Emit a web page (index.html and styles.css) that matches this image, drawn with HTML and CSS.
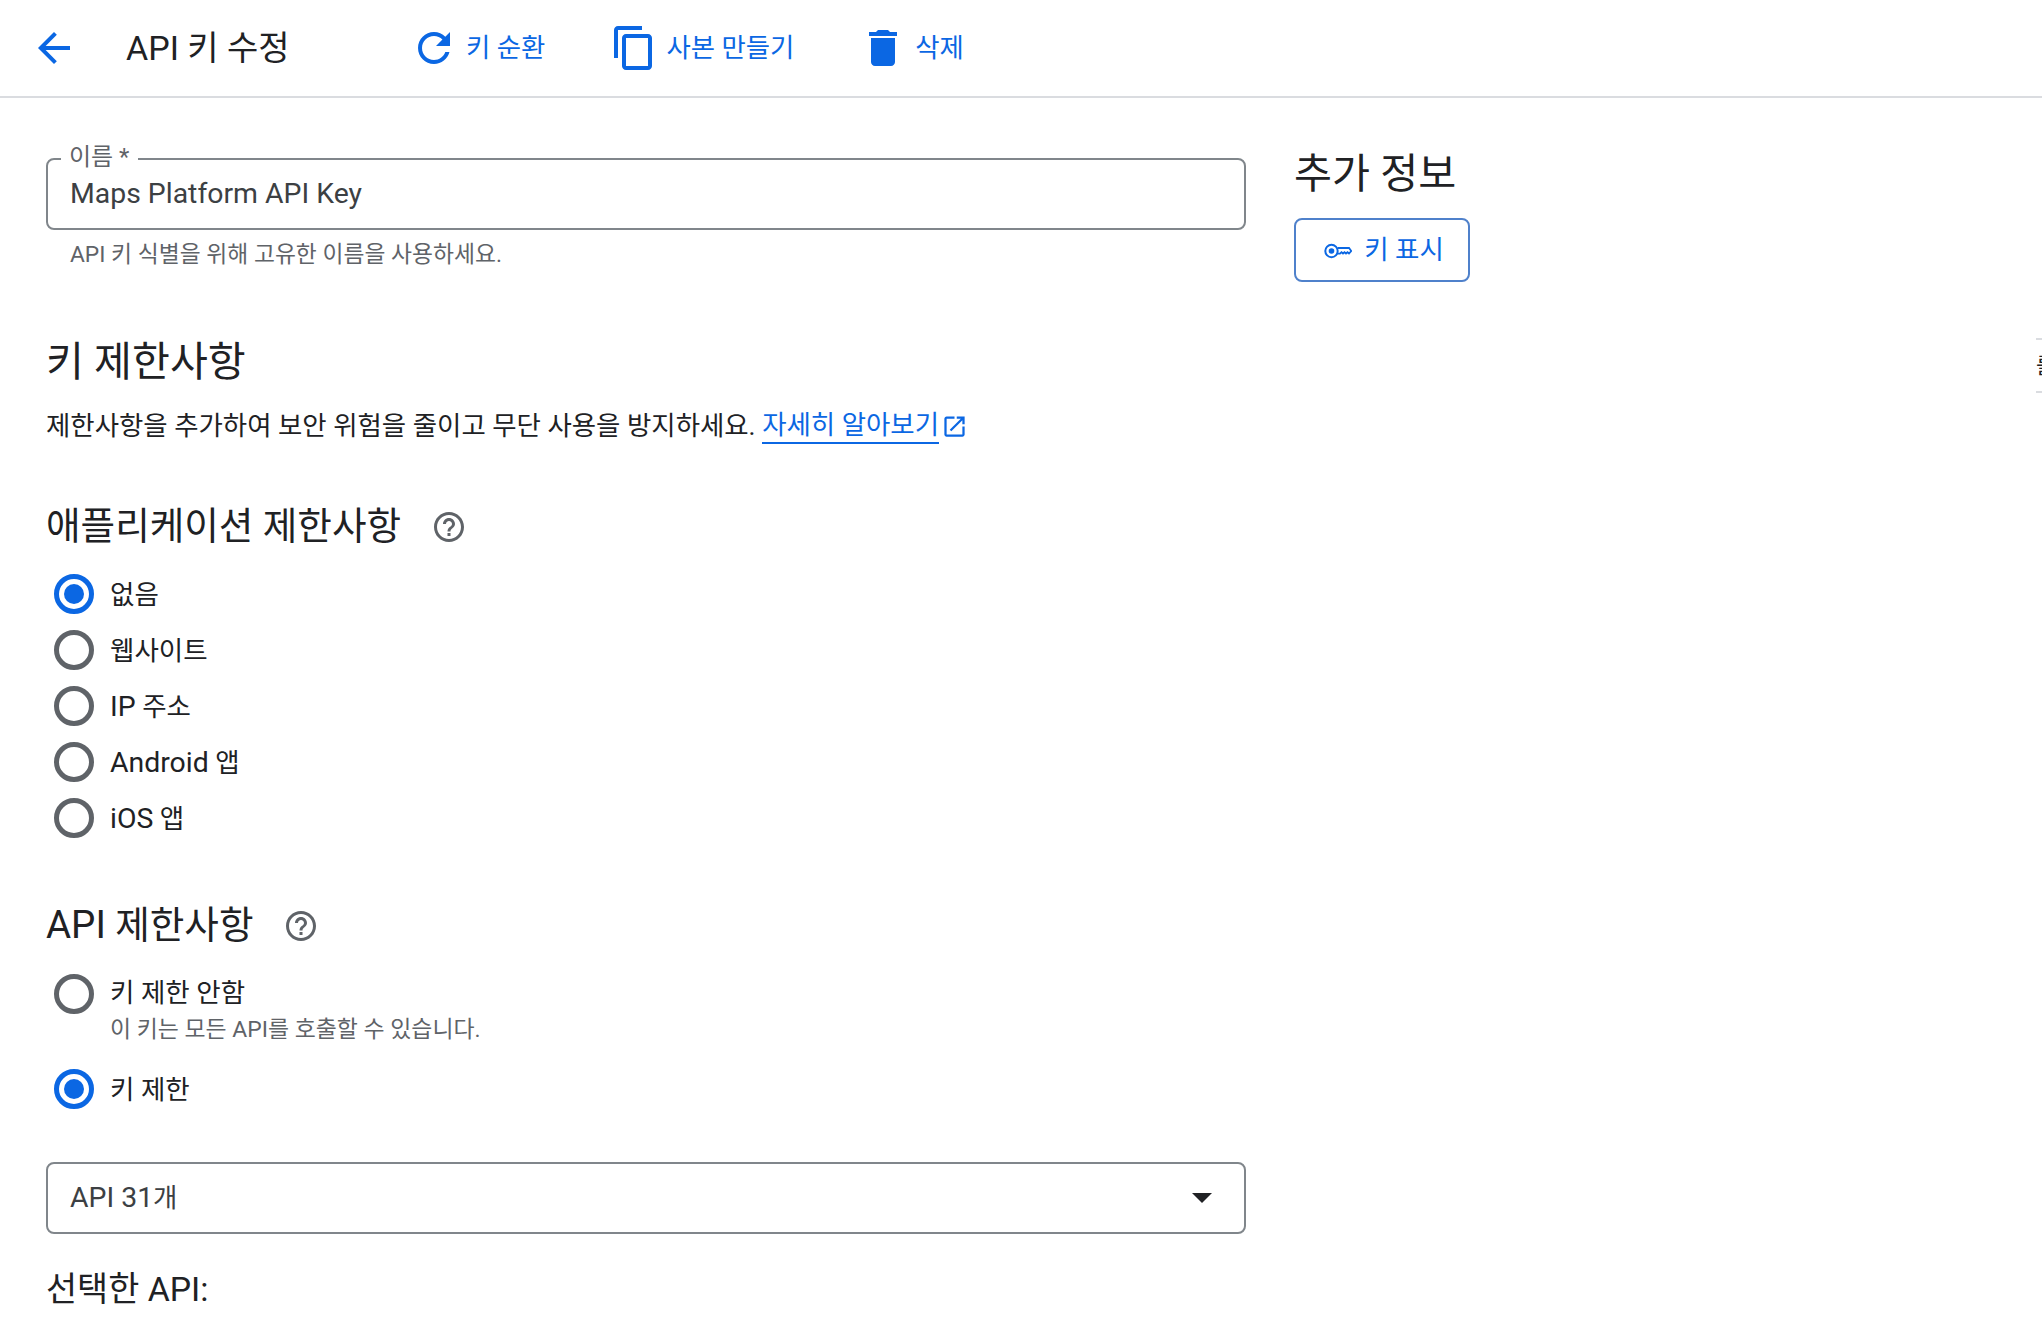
FILE: index.html
```html
<!DOCTYPE html>
<html lang="ko">
<head>
<meta charset="utf-8">
<title>API 키 수정</title>
<link rel="stylesheet" href="styles.css">
</head>
<body>
<header class="topbar">
  <svg class="icon-48 back" viewBox="0 0 24 24"><path d="M20 11H7.83l5.59-5.59L12 4l-8 8 8 8 1.41-1.41L7.83 13H20v-2z"/></svg>
  <h1 class="page-title">API 키 수정</h1>
  <div class="action act-rotate"><svg class="icon-48" viewBox="0 0 24 24"><path d="M17.65 6.35C16.2 4.9 14.21 4 12 4c-4.42 0-7.99 3.58-7.99 8s3.57 8 7.99 8c3.73 0 6.84-2.55 7.73-6h-2.08c-.82 2.33-3.04 4-5.65 4-3.31 0-6-2.69-6-6s2.69-6 6-6c1.66 0 3.14.69 4.22 1.78L13 11h7V4l-2.35 2.35z"/></svg><span>키 순환</span></div>
  <div class="action act-copy"><svg class="icon-48" viewBox="0 0 24 24"><path d="M16 1H4c-1.1 0-2 .9-2 2v14h2V3h12V1zm3 4H8c-1.1 0-2 .9-2 2v14c0 1.1.9 2 2 2h11c1.100 0 2-.9 2-2V7c0-1.1-.9-2-2-2zm0 16H8V7h11v14z"/></svg><span>사본 만들기</span></div>
  <div class="action act-delete"><svg class="icon-48" viewBox="0 0 24 24"><path d="M6 19c0 1.1.9 2 2 2h8c1.100 0 2-.9 2-2V7H6v12zM19 4h-3.500l-1-1h-5l-1 1H5v2h14V4z"/></svg><span>삭제</span></div>
</header>

<main class="layout">
  <section class="content">
    <div class="field name-field">
      <span class="field-label">이름 *</span>
      <span class="field-value name-value lat">Maps Platform API Key</span>
    </div>
    <p class="hint">API 키 식별을 위해 고유한 이름을 사용하세요.</p>

    <h2 class="heading h-key">키 제한사항</h2>
    <p class="desc">제한사항을 추가하여 보안 위험을 줄이고 무단 사용을 방지하세요. <a class="link">자세히 알아보기</a><svg class="ext" viewBox="0 0 24 24"><path d="M19 19H5V5h7V3H5c-1.110 0-2 .9-2 2v14c0 1.100.89 2 2 2h14c1.100 0 2-.9 2-2v-7h-2v7zM14 3v2h3.590l-9.830 9.830 1.410 1.410L19 6.410V10h2V3h-7z"/></svg></p>

    <div class="heading-row h-app">
      <h2 class="heading">애플리케이션 제한사항</h2>
      <svg class="help" viewBox="0 0 24 24"><path d="M11 18h2v-2h-2v2zm1-16C6.480 2 2 6.480 2 12s4.480 10 10 10 10-4.480 10-10S17.520 2 12 2zm0 18c-4.410 0-8-3.590-8-8s3.590-8 8-8 8 3.590 8 8-3.590 8-8 8zm0-14c-2.210 0-4 1.790-4 4h2c0-1.100.9-2 2-2s2 .9 2 2c0 2-3 1.750-3 5h2c0-2.250 3-2.500 3-5 0-2.210-1.790-4-4-4z"/></svg>
    </div>
    <ul class="radios">
      <li class="radio on"><i class="dot"></i><span class="radio-text">없음</span></li>
      <li class="radio"><i class="dot"></i><span class="radio-text">웹사이트</span></li>
      <li class="radio"><i class="dot"></i><span class="radio-text"><span class="lat">IP</span> 주소</span></li>
      <li class="radio"><i class="dot"></i><span class="radio-text"><span class="lat">Android</span> 앱</span></li>
      <li class="radio"><i class="dot"></i><span class="radio-text"><span class="lat">iOS</span> 앱</span></li>
    </ul>

    <div class="heading-row h-api">
      <h2 class="heading"><span class="lat-h">API</span> 제한사항</h2>
      <svg class="help" viewBox="0 0 24 24"><path d="M11 18h2v-2h-2v2zm1-16C6.480 2 2 6.480 2 12s4.480 10 10 10 10-4.480 10-10S17.520 2 12 2zm0 18c-4.410 0-8-3.590-8-8s3.590-8 8-8 8 3.590 8 8-3.590 8-8 8zm0-14c-2.210 0-4 1.790-4 4h2c0-1.100.9-2 2-2s2 .9 2 2c0 2-3 1.750-3 5h2c0-2.250 3-2.500 3-5 0-2.210-1.790-4-4-4z"/></svg>
    </div>
    <ul class="radios api-radios">
      <li class="radio with-sub"><i class="dot"></i><div><span class="sub-title">키 제한 안함</span><small>이 키는 모든 API를 호출할 수 있습니다.</small></div></li>
      <li class="radio on"><i class="dot"></i><span class="radio-text">키 제한</span></li>
    </ul>

    <div class="field select-field">
      <span class="field-value"><span class="lat">API 31</span>개</span>
      <i class="caret"></i>
    </div>
    <h3 class="selected">선택한 API:</h3>
  </section>

  <aside class="side">
    <h2 class="heading side-title">추가 정보</h2>
    <button class="show-key"><svg class="key" viewBox="0 0 28 16"><circle cx="7.500" cy="8" r="6.200" fill="none" stroke="currentColor" stroke-width="2"/><circle cx="7.500" cy="8" r="2.800"/><path d="M13.500 5H25l2.300 3-2.300 2.500-1.500-1.300-1.500 1.300-1.500-1.300-1.500 1.300-1.500-1.300-1.500 1.500h-2.500" fill="none" stroke="currentColor" stroke-width="1.800"/></svg><span>키 표시</span></button>
  </aside>
</main>
<div class="edge-tab"><span>를</span></div>
</body>
</html>
```

FILE: styles.css
```css
* { box-sizing: border-box; }
html, body { margin: 0; padding: 0; height: 1318px; overflow: hidden; background: #fff; }
body { font-family: Roboto, "Noto Sans CJK KR", sans-serif; color: #202124; position: relative; }
h1, h2, h3, p, ul { margin: 0; padding: 0; font-weight: 400; }
ul { list-style: none; }
svg { display: block; fill: currentColor; flex: none; }
.lat { font-size: 28.400px; }
.lat-h { font-size: 38.500px; }

.topbar { height: 98px; border-bottom: 2px solid #dadce0; display: flex; align-items: center; padding-left: 30px; color: #0b67e3; }
.icon-48 { width: 48px; height: 48px; }
.page-title { font-size: 34px; color: #202124; margin-left: 48px; width: 284px; padding-bottom: 5px; }
.action { display: flex; align-items: center; font-size: 26.400px; gap: 8px; }
.action span { padding-bottom: 5px; }
.act-copy { margin-left: 65px; }
.act-delete { margin-left: 65px; }

.layout { display: flex; padding-left: 46px; gap: 48px; }
.content { width: 1200px; }
.field { border: 2px solid #80868b; border-radius: 8px; height: 72px; position: relative; display: flex; align-items: center; padding: 0 22px; font-size: 26.500px; color: #3c4043; }
.field-value { padding-bottom: 5px; }
.name-value { padding-bottom: 1px; }
.name-field { margin-top: 60px; }
.field-label { position: absolute; left: 13px; top: -17px; padding: 0 9px 0 8px; background: #fff; font-size: 24px; line-height: 28px; color: #5f6368; }
.hint { font-size: 22.800px; color: #5f6368; margin: 8px 0 0 24px; line-height: 34px; }
.heading { font-size: 37.600px; line-height: 50px; color: #202124; }
.h-key { margin-top: 65px; font-size: 41.200px; }
.desc { font-size: 26.450px; line-height: 40px; margin-top: 19px; display: flex; align-items: center; color: #202124; white-space: pre; }
.link { color: #0b67e3; border-bottom: 2px solid #0b67e3; line-height: 34px; }
.ext { width: 27px; height: 27px; color: #0b67e3; margin-left: 2px; }
.heading-row { display: flex; align-items: center; gap: 30px; }
.help { width: 36px; height: 36px; color: #5f6368; margin-top: 2px; }
.h-app { margin-top: 55px; }
.radios { margin-top: 23px; display: flex; flex-direction: column; gap: 16px; }
.radio { display: flex; align-items: center; gap: 16px; margin-left: 8px; font-size: 26.500px; height: 40px; color: #202124; }
.radio-text { padding-bottom: 4px; }
.dot { width: 40px; height: 40px; border-radius: 50%; border: 5px solid #5f6368; flex: none; position: relative; }
.on .dot { border-color: #0b67e3; }
.on .dot::after { content: ""; position: absolute; inset: 5px; border-radius: 50%; background: #0b67e3; }
.h-api { margin-top: 62px; }
.api-radios { margin-top: 24px; gap: 0; }
.with-sub { height: 74px; align-items: flex-start; margin-bottom: 21px; }
.with-sub small { display: block; font-size: 22.900px; line-height: 34px; color: #5f6368; margin-top: 1px; }
.sub-title { display: block; line-height: 38px; }
.select-field { margin-top: 53px; justify-content: space-between; color: #3c4043; }
.caret { width: 0; height: 0; border-left: 10px solid transparent; border-right: 10px solid transparent; border-top: 10px solid #202124; margin-right: 10px; }
.selected { font-size: 33.800px; line-height: 44px; margin-top: 34px; color: #202124; }

.side { padding-top: 51px; }
.side-title { font-size: 41.300px; line-height: 50px; }
.show-key { margin-top: 19px; width: 176px; height: 64px; background: #fff; border: 2px solid #4f81cb; border-radius: 8px; color: #0b67e3; font: inherit; font-size: 26.500px; display: flex; align-items: center; justify-content: center; gap: 12px; padding: 0 0 0 4px; }
.show-key span { padding-bottom: 5px; }
.key { width: 28px; height: 16px; margin-top: 1px; }
.edge-tab { position: absolute; right: 0; top: 338px; width: 6px; height: 55px; border-top: 2px solid #dadce0; border-bottom: 2px solid #dadce0; overflow: hidden; font-size: 22px; line-height: 51px; }
```
